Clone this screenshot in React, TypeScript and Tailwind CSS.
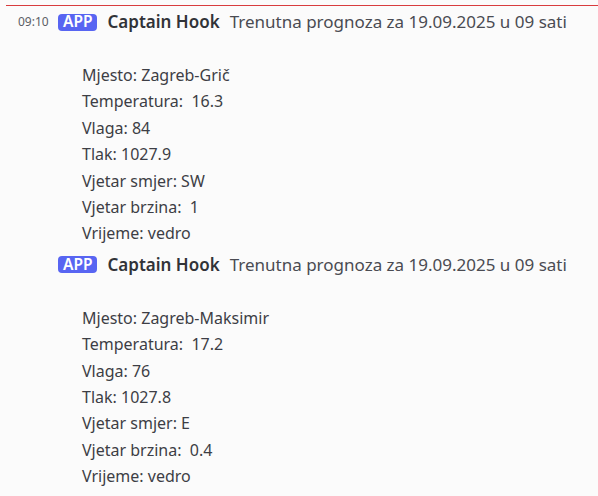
const lines1 = [
  "Mjesto: Zagreb-Grič",
  "Temperatura:  16.3",
  "Vlaga: 84",
  "Tlak: 1027.9",
  "Vjetar smjer: SW",
  "Vjetar brzina:  1",
  "Vrijeme: vedro",
];

const lines2 = [
  "Mjesto: Zagreb-Maksimir",
  "Temperatura:  17.2",
  "Vlaga: 76",
  "Tlak: 1027.8",
  "Vjetar smjer: E",
  "Vjetar brzina:  0.4",
  "Vrijeme: vedro",
];

const Header = ({ time }: { time?: string }) => (
  <div className="flex items-center h-[26px]">
    <div className="w-[58px] shrink-0 pl-[18px] text-[12px] text-[#5c5e66]">{time}</div>
    <span className="bg-[#5865f2] text-white text-[15.5px] font-semibold leading-none rounded-[4px] px-[5px] h-[17px] flex items-center">
      APP
    </span>
    <span className="ml-[10px] text-[17px] font-semibold text-[#313338]">Captain Hook</span>
    <span className="ml-[10px] text-[17px] text-[#4a4b52]">Trenutna prognoza za 19.09.2025 u 09 sati</span>
  </div>
);

const Body = ({ lines }: { lines: string[] }) => (
  <div className="pl-[82px] pt-[27px] text-[16px] leading-[26.4px] text-[#3d3e45] whitespace-pre">
    {lines.map((l) => (
      <div key={l}>{l}</div>
    ))}
  </div>
);

export default function App() {
  return (
    <div
      className="w-[598px] h-[496px] bg-[#fbfbfb] overflow-hidden"
      style={{ fontFamily: '"Noto Sans", sans-serif' }}
    >
      <div className="pt-[5px] pl-[6px]">
        <div className="h-px bg-[#d83c3e]" />
      </div>
      <div className="pt-[3px]">
        <Header time="09:10" />
        <Body lines={lines1} />
      </div>
      <div className="pt-[5px]">
        <Header />
        <Body lines={lines2} />
      </div>
    </div>
  );
}
